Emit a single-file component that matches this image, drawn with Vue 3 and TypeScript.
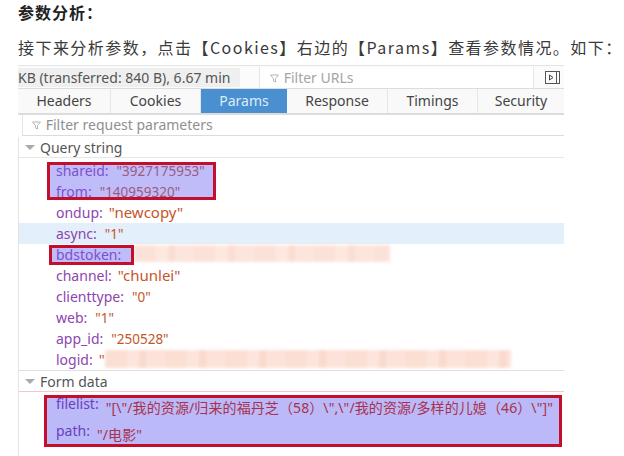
<script setup lang="ts">
interface Row { k: string; v: string; on?: boolean; num?: boolean }
const tabs = ['Headers', 'Cookies', 'Params', 'Response', 'Timings', 'Security']
const query: Row[] = [
  { k: 'shareid', v: '"3927175953"', num: true },
  { k: 'from', v: '"140959320"', num: true },
  { k: 'ondup', v: '"newcopy"' },
  { k: 'async', v: '"1"', on: true, num: true },
  { k: 'bdstoken', v: '' },
  { k: 'channel', v: '"chunlei"' },
  { k: 'clienttype', v: '"0"', num: true },
  { k: 'web', v: '"1"', num: true },
  { k: 'app_id', v: '"250528"', num: true },
  { k: 'logid', v: '"' }
]
</script>

<template>
  <div class="page">
    <h3 class="title">参数分析：</h3>
    <p class="intro">接下来分析参数，点击【Cookies】右边的【Params】查看参数情况。如下：</p>
    <div class="panel">
      <div class="toolbar">
        <div class="summary">KB (transferred: 840 B), 6.67 min</div>
        <div class="urlfilter">
          <svg class="funnel" width="9" height="9" viewBox="0 0 9 9"><path d="M0.5 1h8L5.5 4.5V8l-2-1V4.500z" fill="none" stroke="#b5b5b5" /></svg>
          Filter URLs
        </div>
        <svg class="dock" width="15" height="13" viewBox="0 0 15 13">
          <rect x="0.5" y="0.5" width="14" height="12" fill="none" stroke="#555" />
          <path d="M11.500 1v11" stroke="#555" />
          <path d="M4.500 4v5L8 6.500z" fill="none" stroke="#444" />
        </svg>
      </div>
      <div class="tabs">
        <div v-for="t in tabs" :key="t" class="tab" :class="[t.toLowerCase(), { active: t === 'Params' }]">{{ t }}</div>
      </div>
      <div class="reqfilter">
        <svg class="funnel" width="9" height="9" viewBox="0 0 9 9"><path d="M0.5 1h8L5.5 4.5V8l-2-1V4.500z" fill="none" stroke="#b5b5b5" /></svg>
        Filter request parameters
      </div>
      <div class="body">
        <div class="section"><span class="arrow"></span>Query string</div>
        <div class="rows">
          <div v-for="r in query" :key="r.k" class="row" :class="{ on: r.on }">
            <span class="key">{{ r.k }}:</span><span class="val" :class="{ num: r.num }">{{ r.v }}</span>
          </div>
          <div class="smear smear-a"></div>
          <div class="smear smear-b"></div>
          <div class="frame frame-a"></div>
          <div class="frame frame-b"></div>
        </div>
        <div class="section form"><span class="arrow"></span>Form data</div>
        <div class="formrows">
          <div class="row file"><span class="key">filelist:</span><span class="val">"[\"/我的资源/归来的福丹芝（58）\",\"/我的资源/多样的儿媳（46）\"]"</span></div>
          <div class="row pathrow"><span class="key">path:</span><span class="val">"/电影"</span></div>
        </div>
      </div>
    </div>
  </div>
</template>

<style scoped>
.page {
  width: 624px;
  height: 456px;
  overflow: hidden;
  background: #fff;
  box-sizing: border-box;
  padding: 0 0 0 18px;
  font-family: "Noto Sans", "Noto Sans CJK SC", sans-serif;
  color: #333;
}
.title {
  margin: 0;
  height: 24px;
  line-height: 24px;
  font-size: 16px;
  letter-spacing: 1px;
  font-weight: 700;
  color: #222;
  font-family: "Noto Sans CJK SC", sans-serif;
}
.intro {
  margin: 0;
  padding-top: 10px;
  height: 34px;
  line-height: 26px;
  box-sizing: border-box;
  font-size: 16px;
  letter-spacing: 1.45px;
  white-space: nowrap;
  color: #3a3a3a;
  font-family: "Noto Sans CJK SC", sans-serif;
}
.panel {
  margin-top: 7px;
  width: 546px;
  font-size: 14px;
  border-top: 1px solid #e4e4e4;
}
.toolbar {
  display: flex;
  align-items: center;
  height: 22px;
  background: #fbfbfb;
  border-bottom: 1px solid #dcdcdc;
}
.summary {
  width: 222px;
  height: 19px;
  line-height: 19px;
  background: #efefef;
  color: #555;
  white-space: nowrap;
  overflow: hidden;
}
.urlfilter {
  margin-left: 19px;
  width: 275px;
  height: 21px;
  line-height: 21px;
  background: #fff;
  border-left: 1px solid #e6e6e6;
  border-right: 1px solid #e6e6e6;
  box-sizing: border-box;
  color: #a5a5a5;
  padding-left: 10px;
}
.funnel { margin-right: 1px; }
.dock { margin-left: 11px; }
.tabs {
  display: flex;
  height: 24px;
  background: #f9f9f9;
  border-bottom: 2px solid #dcdcdc;
}
.tab {
  text-align: center;
  line-height: 23px;
  color: #444;
  border-right: 1px solid #e6e6e6;
  box-sizing: border-box;
}
.headers { width: 93px; }
.cookies { width: 90px; }
.params { width: 86px; }
.response { width: 101px; }
.timings { width: 90px; }
.security { width: 86px; border-right: 0; }
.tab.active {
  background: #4a90d0;
  color: #dcebf8;
  border-right: 0;
}
.reqfilter {
  height: 21px;
  line-height: 20px;
  margin: 0 0 1px 4px;
  padding-left: 9px;
  box-sizing: border-box;
  color: #8f8f8f;
  background: #fff;
  border-left: 1px solid #e4e4e4;
  border-bottom: 1px solid #dcdcdc;
}
.body {
  border-left: 1px solid #e4e4e4;
  padding-bottom: 12px;
}
.section {
  display: flex;
  align-items: center;
  height: 21px;
  padding-left: 6px;
  box-sizing: border-box;
  color: #555;
  border-bottom: 1px solid #e6e6e6;
}
.arrow {
  width: 0;
  height: 0;
  margin-right: 5px;
  border-left: 5px solid transparent;
  border-right: 5px solid transparent;
  border-top: 5px solid #aaa;
}
.rows {
  position: relative;
  padding-top: 2px;
}
.row {
  height: 21px;
  line-height: 21px;
  padding-left: 37px;
  white-space: nowrap;
}
.row.on { background: #e3effa; }
.key { color: #8d45b0; }
.val {
  color: #c4562a;
  font-size: 15px;
  margin-left: 6px;
}
.val.num {
  font-size: 13.5px;
  margin-left: 8px;
}
.smear {
  position: absolute;
  filter: blur(1.5px);
  background: repeating-linear-gradient(90deg, #fbdccf 0 22px, #fde3d9 22px 34px, #fad6c9 34px 41px, #fcdfd4 41px 60px);
}
.smear-a { left: 115px; top: 87px; width: 256px; height: 17px; opacity: 0.8; }
.smear-b { left: 86px; top: 192px; width: 406px; height: 18px; opacity: 0.9; }
.frame {
  position: absolute;
  box-sizing: border-box;
  border: 3px solid #c40f2c;
  background: rgba(104, 96, 240, 0.42);
}
.frame-a { left: 28px; top: 4px; width: 169px; height: 38px; }
.frame-b { left: 30px; top: 87px; width: 85px; height: 20px; }
.section.form {
  height: 22px;
  border-top: 1px solid #e0e0e0;
  border-bottom-color: #f3c6d2;
}
.formrows {
  margin: 3px 0 0 25px;
  height: 52px;
  width: 518px;
  box-sizing: border-box;
  border: 3px solid #c40f2c;
  background: #bbb9f8;
}
.formrows .row { padding-left: 9px; }
.file { margin-top: -5px; }
.pathrow { margin-top: 6px; }
.formrows .key { color: #6a3fc0; }
.formrows .val {
  color: #a8324e;
  font-size: 14px;
  margin-left: 7px;
  letter-spacing: 0.1px;
  vertical-align: -4px;
}
</style>
